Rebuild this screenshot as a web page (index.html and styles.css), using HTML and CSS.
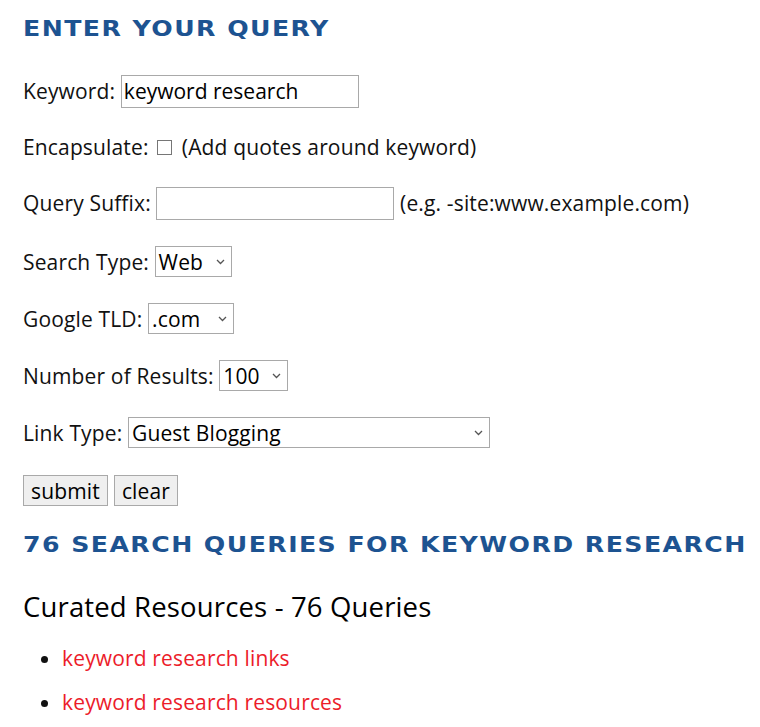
FILE: index.html
```html
<!DOCTYPE html>
<html>
<head>
<meta charset="utf-8">
<link rel="stylesheet" href="styles.css">
</head>
<body>
<div class="page">
  <h2 class="title"><span class="title-text">ENTER YOUR QUERY</span></h2>
  <form class="form">
    <div class="row">Keyword:&nbsp;<input class="field kw" type="text" value="keyword research"></div>
    <div class="row">Encapsulate:&nbsp;<span class="check"></span>&nbsp;(Add quotes around keyword)</div>
    <div class="row">Query Suffix:&nbsp;<input class="field suffix" type="text" value="">&nbsp;(e.g. -site:www.example.com)</div>
    <div class="row sel-row first-sel">Search Type:&nbsp;<span class="sel w-web"><span class="sel-text">Web</span><svg class="chev" width="9" height="6" viewBox="0 0 9 6"><path d="M1 1 L4.5 4.5 L8 1" fill="none" stroke="#555" stroke-width="1.3"/></svg></span></div>
    <div class="row sel-row">Google TLD:&nbsp;<span class="sel w-tld"><span class="sel-text">.com</span><svg class="chev" width="9" height="6" viewBox="0 0 9 6"><path d="M1 1 L4.5 4.5 L8 1" fill="none" stroke="#555" stroke-width="1.3"/></svg></span></div>
    <div class="row sel-row">Number of Results:&nbsp;<span class="sel w-num"><span class="sel-text">100</span><svg class="chev" width="9" height="6" viewBox="0 0 9 6"><path d="M1 1 L4.5 4.5 L8 1" fill="none" stroke="#555" stroke-width="1.3"/></svg></span></div>
    <div class="row sel-row">Link Type:&nbsp;<span class="sel w-link"><span class="sel-text">Guest Blogging</span><svg class="chev" width="9" height="6" viewBox="0 0 9 6"><path d="M1 1 L4.5 4.5 L8 1" fill="none" stroke="#555" stroke-width="1.3"/></svg></span></div>
    <div class="row buttons"><button type="button" class="btn">submit</button><button type="button" class="btn">clear</button></div>
  </form>
  <h2 class="title title2"><span class="title-text">76 SEARCH QUERIES FOR KEYWORD RESEARCH</span></h2>
  <h3 class="sub">Curated Resources - 76 Queries</h3>
  <ul class="links">
    <li><a href="#">keyword research links</a></li>
    <li><a href="#">keyword research resources</a></li>
  </ul>
</div>
</body>
</html>
```
FILE: styles.css
```css
html, body {
  margin: 0;
  padding: 0;
  background: #fff;
}
.page {
  padding: 0 0 0 23px;
  font-family: "Open Sans", "Noto Sans", sans-serif;
  font-size: 21px;
  letter-spacing: 0.15px;
  color: #111;
}
.title {
  margin: 0;
  padding-top: 15px;
  font-family: "DejaVu Sans", sans-serif;
  font-weight: bold;
  font-size: 21px;
  line-height: 28px;
  letter-spacing: 1.2px;
  color: #1d5391;
  white-space: nowrap;
}
.title-text {
  display: inline-block;
  transform: scaleX(1.2);
  transform-origin: left center;
}
.form {
  margin-top: 31px;
  display: flex;
  flex-direction: column;
  gap: 22px;
}
.row {
  display: flex;
  align-items: center;
  height: 34px;
  white-space: nowrap;
}
.sel-row { height: 35px; }
.first-sel { margin-top: 2px; }
.field {
  box-sizing: border-box;
  height: 33px;
  border: 1px solid #a9a9a9;
  padding: 0 2px;
  font-family: inherit;
  font-size: 21px;
  color: #000;
  background: #fff;
  outline: none;
}
.kw { width: 238px; }
.suffix { width: 238px; }
.check {
  display: inline-block;
  box-sizing: border-box;
  width: 15px;
  height: 15px;
  border: 1px solid #767676;
  margin: 0 4px 0 3px;
  background: #fff;
}
.sel {
  position: relative;
  display: inline-flex;
  align-items: center;
  box-sizing: border-box;
  height: 31px;
  border: 1px solid #a9a9a9;
  padding: 0 0 0 3px;
  background: #fff;
  color: #000;
}
.sel-text { line-height: 29px; padding-top: 2px; }
.chev {
  position: absolute;
  right: 6px;
  top: 12px;
}
.w-web { width: 77px; }
.w-tld { width: 86px; }
.w-num { width: 69px; }
.w-link { width: 362px; }
.buttons { gap: 6px; height: 31px; margin-top: 3px; }
.btn {
  box-sizing: border-box;
  height: 31px;
  padding: 0 7px;
  border: 1px solid #a9a9a9;
  background: #efefef;
  font-family: inherit;
  font-size: 21px;
  letter-spacing: 0.15px;
  color: #000;
  border-radius: 0;
}
.title2 {
  padding-top: 25px;
}
.sub {
  margin: 31px 0 0;
  font-weight: normal;
  font-size: 27.5px;
  line-height: 34px;
  color: #000;
}
.links {
  margin: 20px 0 0;
  padding-left: 39px;
  list-style: disc;
}
.links li {
  line-height: 28px;
  margin-bottom: 16px;
}
.links a {
  color: #ec1c2a;
  text-decoration: none;
}
```
